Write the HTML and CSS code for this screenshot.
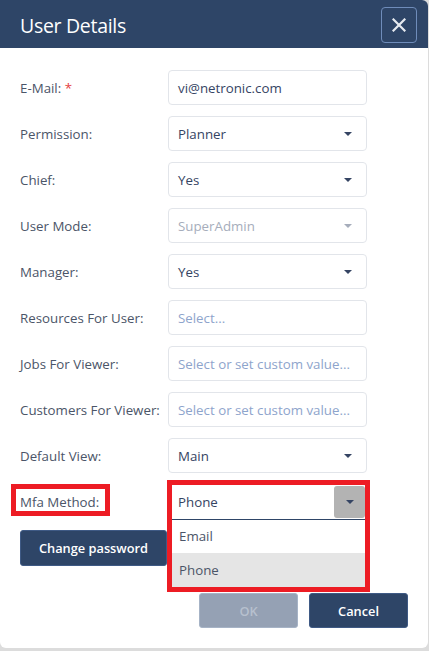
FILE: index.html
```html
<!DOCTYPE html>
<html>
<head>
<meta charset="utf-8">
<link rel="stylesheet" href="styles.css">
</head>
<body>
<div class="dialog">
  <div class="header">
    <div class="title">User Details</div>
    <button class="close" aria-label="Close">
      <svg width="14" height="14" viewBox="0 0 14 14"><path d="M1.5 1.5 L12.5 12.5 M12.5 1.5 L1.5 12.5" stroke="#e6eaf0" stroke-width="2.2" stroke-linecap="square"/></svg>
    </button>
  </div>
  <div class="body">
    <div class="row">
      <div class="label">E-Mail: <span class="req">*</span></div>
      <div class="field"><span class="val">vi@netronic.com</span></div>
    </div>
    <div class="row">
      <div class="label">Permission:</div>
      <div class="field"><span class="val">Planner</span><span class="caret"></span></div>
    </div>
    <div class="row">
      <div class="label">Chief:</div>
      <div class="field"><span class="val">Yes</span><span class="caret"></span></div>
    </div>
    <div class="row">
      <div class="label">User Mode:</div>
      <div class="field disabled"><span class="val">SuperAdmin</span><span class="caret"></span></div>
    </div>
    <div class="row">
      <div class="label">Manager:</div>
      <div class="field"><span class="val">Yes</span><span class="caret"></span></div>
    </div>
    <div class="row">
      <div class="label">Resources For User:</div>
      <div class="field"><span class="ph">Select...</span></div>
    </div>
    <div class="row">
      <div class="label">Jobs For Viewer:</div>
      <div class="field"><span class="ph">Select or set custom value...</span></div>
    </div>
    <div class="row">
      <div class="label">Customers For Viewer:</div>
      <div class="field"><span class="ph">Select or set custom value...</span></div>
    </div>
    <div class="row">
      <div class="label">Default View:</div>
      <div class="field"><span class="val">Main</span><span class="caret"></span></div>
    </div>
    <div class="row mfa">
      <div class="label">Mfa Method:<span class="mark mark-label"></span></div>
      <div class="combo">
        <div class="field open"><span class="val">Phone</span><span class="arrowbtn"><span class="caret"></span></span></div>
        <div class="list">
          <div class="opt">Email</div>
          <div class="opt sel">Phone</div>
        </div>
        <span class="mark mark-combo"></span>
      </div>
    </div>
    <div class="pwrow">
      <button class="btn">Change password</button>
    </div>
    <div class="footer">
      <button class="btn off">OK</button>
      <button class="btn">Cancel</button>
    </div>
  </div>
</div>
</body>
</html>
```

FILE: styles.css
```css
* { box-sizing: border-box; }
html, body { margin: 0; padding: 0; }
body {
  background: #dcdcdc;
  width: 429px;
  height: 651px;
  overflow: hidden;
  font-family: "Open Sans", "Noto Sans", sans-serif;
}
.dialog {
  width: 428px;
  height: 648px;
  background: #fff;
  border-radius: 0 6px 6px 6px;
  overflow: hidden;
}
.header {
  height: 48px;
  background: #2e4567;
  display: flex;
  align-items: center;
  justify-content: space-between;
  padding: 0 11px 0 20px;
}
.title {
  color: #fff;
  font-size: 19.5px;
  letter-spacing: -0.3px;
  padding-top: 2px;
}
.close {
  width: 36px;
  height: 36px;
  border: 1px solid #6f8cba;
  border-radius: 4px;
  background: transparent;
  display: flex;
  align-items: center;
  justify-content: center;
  padding: 0;
  margin-top: 2px;
}
.body {
  padding: 22px 20px 0 20px;
  display: flex;
  flex-direction: column;
}
.row {
  display: grid;
  grid-template-columns: 148px 199px;
  align-items: center;
  height: 35px;
  margin-bottom: 11px;
  position: relative;
}
.label {
  font-size: 13.3px;
  color: #4b5568;
  position: relative;
  white-space: nowrap;
}
.req { color: #e53e3e; }
.field {
  height: 35px;
  border: 1px solid #e2e5ea;
  border-radius: 4px;
  display: flex;
  align-items: center;
  padding: 0 9px;
  font-size: 13.3px;
  color: #354463;
  position: relative;
  background: #fff;
  white-space: nowrap;
}
.val { flex: 1; }
.ph { color: #8ea4cc; }
.caret {
  width: 0; height: 0;
  border-left: 4px solid transparent;
  border-right: 4px solid transparent;
  border-top: 4px solid #354463;
  margin-right: 5px;
}
.disabled .val { color: #a6adbb; }
.disabled .caret { border-top-color: #a6adbb; }
.combo { position: relative; height: 35px; }
.field.open {
  height: 36px;
  border-color: #e2e5ea;
  border-bottom: 1px solid #2e4567;
  border-radius: 4px 4px 0 0;
  padding-right: 1px;
}
.arrowbtn {
  width: 31px;
  height: 32px;
  background: #b3b3b3;
  border-radius: 3px;
  display: flex;
  align-items: center;
  justify-content: center;
}
.arrowbtn .caret { margin: 0; }
.list {
  position: absolute;
  left: 0; top: 36px;
  width: 199px;
  background: #fff;
  z-index: 2;
}
.opt {
  height: 34px;
  line-height: 34px;
  padding-left: 11px;
  font-size: 13.3px;
  color: #4b5568;
}
.opt:first-child { height: 33px; line-height: 33px; }
.opt.sel { background: #e5e5e5; }
.mark {
  position: absolute;
  border: 5px solid #ed1c24;
  z-index: 3;
  pointer-events: none;
}
.mark-label { left: -9px; top: -9px; width: 99px; height: 32px; }
.mark-combo { left: -1px; top: -4px; width: 203px; height: 112px; }
.pwrow { display: flex; margin-top: 0; }
.btn {
  height: 36px;
  background: #2e4567;
  color: #fff;
  border: 1px solid #3f5a85;
  border-radius: 3px;
  font-family: "Open Sans", "Noto Sans", sans-serif;
  font-size: 12.8px;
  font-weight: 600;
  padding: 0;
  width: 147px;
}
.footer {
  display: flex;
  justify-content: flex-end;
  gap: 11px;
  margin-top: 27px;
}
.footer .btn { width: 99px; height: 35px; }
.btn.off { background: #95a1b4; color: #b7c0ce; border-color: #a6b3c6; }
```
